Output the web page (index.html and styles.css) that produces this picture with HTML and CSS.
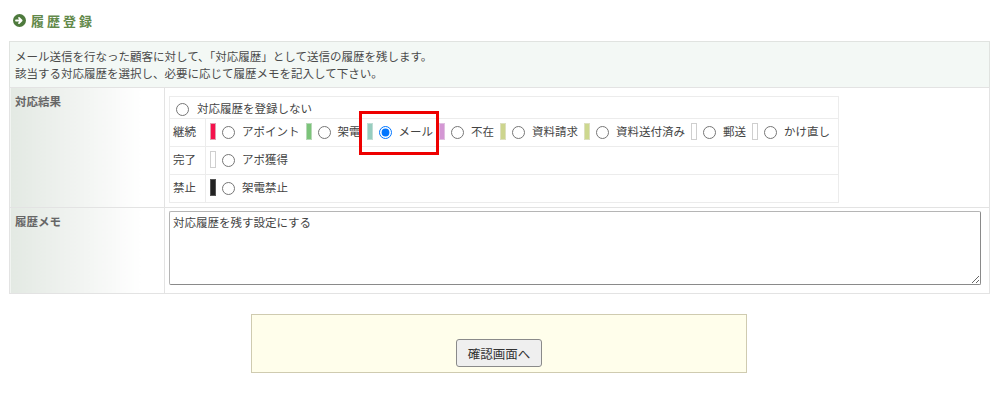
FILE: index.html
```html
<!DOCTYPE html>
<html lang="ja">
<head>
<meta charset="utf-8">
<title>履歴登録</title>
<link rel="stylesheet" href="styles.css">
</head>
<body>
<div class="page">
  <h2 class="title">
    <svg class="title-icon" width="13" height="13" viewBox="0 0 13 13"><circle cx="6.5" cy="6.5" r="6.5" fill="#4e7a3d"/><path d="M3 6.5h5.2M6 3.9l2.6 2.6L6 9.1" stroke="#fff" stroke-width="1.8" fill="none" stroke-linecap="round" stroke-linejoin="round"/></svg>
    <span>履歴登録</span>
  </h2>
  <div class="desc">
    <p>メール送信を行なった顧客に対して、「対応履歴」として送信の履歴を残します。</p>
    <p>該当する対応履歴を選択し、必要に応じて履歴メモを記入して下さい。</p>
  </div>
  <table class="form">
    <tr>
      <th class="label">対応結果</th>
      <td class="value">
        <table class="results">
          <tr>
            <td colspan="2" class="none-row"><div class="opt-line"><label class="opt first"><input type="radio" name="r"><span>対応履歴を登録しない</span></label></div></td>
          </tr>
          <tr>
            <th class="group">継続</th>
            <td class="opts"><div class="opt-line">
              <label class="opt"><i class="bar c-red"></i><input type="radio" name="r"><span>アポイント</span></label>
              <label class="opt"><i class="bar c-green"></i><input type="radio" name="r"><span>架電</span></label>
              <label class="opt mark"><i class="bar c-teal"></i><input type="radio" name="r" checked><span>メール</span><b class="highlight"></b></label>
              <label class="opt"><i class="bar c-purple"></i><input type="radio" name="r"><span>不在</span></label>
              <label class="opt"><i class="bar c-olive"></i><input type="radio" name="r"><span>資料請求</span></label>
              <label class="opt"><i class="bar c-olive2"></i><input type="radio" name="r"><span>資料送付済み</span></label>
              <label class="opt"><i class="bar c-white"></i><input type="radio" name="r"><span>郵送</span></label>
              <label class="opt"><i class="bar c-white"></i><input type="radio" name="r"><span>かけ直し</span></label>
            </div></td>
          </tr>
          <tr>
            <th class="group">完了</th>
            <td class="opts"><div class="opt-line"><label class="opt"><i class="bar c-white"></i><input type="radio" name="r"><span>アポ獲得</span></label></div></td>
          </tr>
          <tr>
            <th class="group">禁止</th>
            <td class="opts"><div class="opt-line"><label class="opt"><i class="bar c-black"></i><input type="radio" name="r"><span>架電禁止</span></label></div></td>
          </tr>
        </table>
      </td>
    </tr>
    <tr>
      <th class="label">履歴メモ</th>
      <td class="value memo"><textarea class="memo-input">対応履歴を残す設定にする</textarea></td>
    </tr>
  </table>
  <div class="submit">
    <button class="submit-btn" type="button">確認画面へ</button>
  </div>
</div>
</body>
</html>
```
FILE: styles.css
```css
html, body {
  margin: 0;
  padding: 0;
  background: #fff;
}
body {
  font-family: "Noto Sans CJK JP", "Noto Sans", sans-serif;
  font-size: 11.5px;
  color: #444;
}
.page {
  width: 981px;
  padding: 0 0 0 9px;
}
.title {
  display: flex;
  align-items: center;
  margin: 0;
  padding: 14px 0 0 4px;
  height: 27px;
  box-sizing: border-box;
  font-size: 13px;
  font-weight: bold;
  letter-spacing: 3px;
  color: #62894a;
  line-height: 16px;
}
.title-icon {
  margin-right: 5px;
  flex: none;
}
.desc {
  margin-top: 14px;
  border: 1px solid #e0e3e0;
  border-bottom: none;
  background: #f3f8f5;
  padding: 6px 6px 5px 5px;
  line-height: 17px;
  color: #4a4a4a;
}
.desc p {
  margin: 0;
}
.form {
  width: 981px;
  border-collapse: collapse;
}
.form > tbody > tr > th,
.form > tbody > tr > td {
  border: 1px solid #e3e3e3;
}
.label {
  width: 150px;
  text-align: left;
  vertical-align: top;
  padding: 5px 5px;
  font-weight: bold;
  color: #666;
  background: linear-gradient(to right, #e3e9e3 0%, #f3f5f3 50%, #ffffff 85%);
  line-height: 17px;
}
.value {
  vertical-align: top;
  padding: 8px 8px 4px 4px;
}
.results {
  border-collapse: collapse;
  white-space: nowrap;
}
.results th,
.results td {
  border: 1px solid #ececec;
}
.none-row {
  padding: 3px 4px 1px 6px;
}
.group {
  width: 28px;
  text-align: left;
  vertical-align: top;
  font-weight: normal;
  color: #444;
  padding: 4px 4px 6px 3px;
  line-height: 17px;
}
.opts {
  padding: 4px 2px 6px 4px;
  vertical-align: top;
}
.opt-line {
  display: flex;
  align-items: center;
  height: 17px;
}
.opt {
  display: flex;
  align-items: center;
  height: 17px;
  line-height: 17px;
  color: #444;
  margin-right: 6px;
  position: relative;
}
.opt input {
  width: 13px;
  height: 13px;
  margin: 2px 7px 0 6px;
  flex: none;
}
.opt.first input {
  margin: 2px 8px 0 0;
}
.bar {
  display: block;
  flex: none;
  width: 4px;
  height: 15px;
  border: 1px solid #c9c9c9;
}
.c-red { background: #f5124c; border-color: #e0a0b0; }
.c-green { background: #7cc47a; border-color: #b8d8b8; }
.c-teal { background: #97cdbf; border-color: #c0ddd5; }
.c-purple { background: #d497d4; border-color: #e0c0e0; }
.c-olive { background: #cdd58e; border-color: #dde0bf; }
.c-olive2 { background: #cdd88f; border-color: #dde0bf; }
.c-white { background: #fff; border-color: #cfcfcf; }
.c-black { background: #222; border-color: #555; }
.highlight {
  position: absolute;
  left: -8px;
  top: -12px;
  width: 74px;
  height: 38px;
  border: 3px solid #ee0000;
  pointer-events: none;
}
.memo {
  padding: 3px 8px 8px 4px;
}
.memo-input {
  display: block;
  box-sizing: border-box;
  width: 812px;
  height: 74px;
  margin: 0;
  padding: 3px 3px;
  font-family: "Noto Sans CJK JP", "Noto Sans", sans-serif;
  font-size: 11.5px;
  line-height: 15px;
  color: #444;
  border: 1px solid #8a8a8a;
  border-top-color: #b5b5b5;
  border-left-color: #b5b5b5;
  border-radius: 2px;
  resize: both;
}
.submit {
  width: 496px;
  height: 59px;
  margin: 20px 0 0 242px;
  box-sizing: border-box;
  background: #fffeeb;
  border: 1px solid #cfcbb0;
  display: flex;
  justify-content: center;
  align-items: flex-end;
  padding-bottom: 5px;
}
.submit-btn {
  width: 86px;
  height: 28px;
  font-family: "Noto Sans CJK JP", "Noto Sans", sans-serif;
  font-size: 12.5px;
  color: #333;
  background: #efefef;
  border: 1px solid #8a8a8a;
  border-radius: 3px;
  padding: 0;
}
```
